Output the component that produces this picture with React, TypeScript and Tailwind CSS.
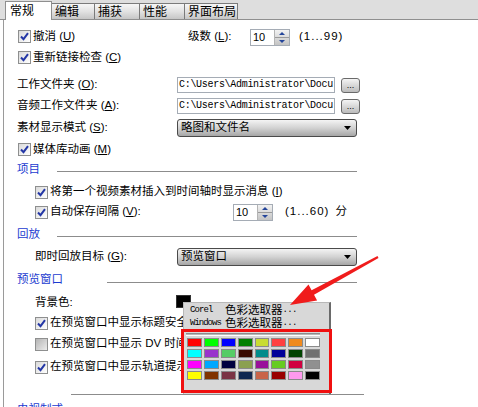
import React from "react";

const Check = ({ checked = true, disabled = false }: { checked?: boolean; disabled?: boolean }) => (
  <span
    className={
      disabled
        ? "inline-flex h-[13px] w-[13px] shrink-0 items-center justify-center border border-[#8e8f8f] bg-linear-to-br from-[#b4b4b4] to-[#ececec]"
        : "inline-flex h-[13px] w-[13px] shrink-0 items-center justify-center border border-[#8e8f8f] bg-linear-to-br from-[#dadada] to-white"
    }
  >
    {checked && (
      <svg width="9" height="9" viewBox="0 0 9 9">
        <path d="M1 4.5 L3.5 7.2 L8 1.2" fill="none" stroke="#2437a6" strokeWidth="2" />
      </svg>
    )}
  </span>
);

const Spin = ({ value }: { value: string }) => (
  <div className="flex h-[17px] w-[40px] shrink-0 border border-[#a5acb5] bg-white">
    <span className="flex-1 pl-[2px] text-[11px] leading-[15px]">{value}</span>
    <span className="flex w-[15px] flex-col border-l border-[#b4b4b4] bg-linear-to-b from-[#f2f2f2] to-[#c4c4c4]">
      <span className="flex flex-1 items-center justify-center border-b border-[#9a9a9a]">
        <svg width="6" height="3" viewBox="0 0 6 3">
          <path d="M0 3 L3 0 L6 3 Z" fill="#24459a" />
        </svg>
      </span>
      <span className="flex flex-1 items-center justify-center">
        <svg width="6" height="3" viewBox="0 0 6 3">
          <path d="M0 0 L6 0 L3 3 Z" fill="#24459a" />
        </svg>
      </span>
    </span>
  </div>
);

const Drop = ({ text }: { text: string }) => (
  <div className="flex h-[18px] w-[180px] shrink-0 items-center justify-between rounded-[3px] border border-[#4a4a4a] bg-linear-to-b from-[#f4f4f4] via-[#d2d2d2] to-[#a6a6a6] pl-[3px] pr-[5px] text-[11.5px]">
    <span>{text}</span>
    <svg width="7" height="4" viewBox="0 0 7 4">
      <path d="M0 0 H7 L3.5 4 Z" fill="#000" />
    </svg>
  </div>
);

const PathInput = () => (
  <div className="flex h-[16px] w-[158px] shrink-0 items-center overflow-hidden whitespace-nowrap border border-[#a5acb5] bg-white pl-[1px] [font-family:'Liberation_Mono',monospace] text-[10px] tracking-[-0.3px]">
    {"C:\\Users\\Administrator\\Docu"}
  </div>
);

const DotBtn = () => (
  <div className="ml-[6px] flex h-[15px] w-[19px] shrink-0 items-end justify-center rounded-[3px] border border-[#6a6a6a] bg-linear-to-b from-[#f4f4f4] to-[#bcbcbc] pb-[2px] text-[9px] leading-none">
    ...
  </div>
);

const Section = ({ label, gap, lineMt }: { label: string; gap: string; lineMt: string }) => (
  <div className="flex h-[20px] w-[340px] shrink-0 items-center">
    <span className="text-[#1b3bd0]">{label}</span>
    <span className={`${gap} ${lineMt} h-px flex-1 bg-[#8c8c8c]`} />
  </div>
);

const palette = [
  ["#ff0000", "#00ff00", "#0000ff", "#008000", "#c8dc32", "#ff4040", "#f08a1e", "#ffffff"],
  ["#00ffff", "#9933cc", "#55cc66", "#3a0a00", "#008b8b", "#000099", "#004400", "#707070"],
  ["#ff00ff", "#00a8ff", "#000040", "#8ba050", "#99109a", "#66cc22", "#d00040", "#909090"],
  ["#ffff00", "#803300", "#7a3344", "#102850", "#c86448", "#990000", "#ff99ee", "#000000"],
];

const Tab = ({ label, w }: { label: string; w: string }) => (
  <div
    className={`${w} flex h-[16px] items-center border-r border-t border-[#7a7a7a] bg-linear-to-b from-[#f6f6f6] via-[#e2e2e2] to-[#c6c6c6] pl-[3px] text-[12px]`}
  >
    {label}
  </div>
);

const Row = ({ mt, pl, children }: { mt: string; pl: string; children: React.ReactNode }) => (
  <div className={`${mt} ${pl} flex h-[20px] shrink-0 items-center whitespace-nowrap`}>{children}</div>
);

export default function App() {
  return (
    <div className="relative h-[407px] w-[478px] overflow-hidden bg-white text-[11.5px] leading-none text-black [font-family:'Liberation_Sans','Noto_Sans_CJK_SC',sans-serif]">
      {/* tab bar */}
      <div className="flex h-[20px] items-end border-b border-[#8f8f8f] bg-[#dedede] pl-[5px]">
        <div className="relative z-10 -mb-px flex h-[19px] w-[47px] items-center border-x border-t border-[#8f8f8f] bg-white pl-[4px] text-[12px]">
          常规
        </div>
        <Tab label="编辑" w="w-[43px]" />
        <Tab label="捕获" w="w-[45px]" />
        <Tab label="性能" w="w-[45px]" />
        <Tab label="界面布局" w="w-[53px]" />
      </div>

      {/* body */}
      <div className="ml-[3px] flex flex-col border-l border-[#9a9a9a] pl-[13px]">
        <Row mt="mt-[7px]" pl="pl-0">
          <div className="flex w-[171px] items-center">
            <span className="ml-[1px]">
              <Check />
            </span>
            <span className="ml-[2px]">
              撤消 (<u>U</u>)
            </span>
          </div>
          <span className="w-[62px]">
            级数 (<u>L</u>):
          </span>
          <Spin value="10" />
          <span className="ml-[9px] tracking-[1px]">(1...99)</span>
        </Row>

        <Row mt="mt-[1px]" pl="pl-0">
          <span className="ml-[1px]">
            <Check />
          </span>
          <span className="ml-[2px]">
            重新链接检查 (<u>C</u>)
          </span>
        </Row>

        <Row mt="mt-[7px]" pl="pl-0">
          <span className="w-[160px]">
            工作文件夹 (<u>O</u>):
          </span>
          <PathInput />
          <DotBtn />
        </Row>

        <Row mt="mt-[1px]" pl="pl-0">
          <span className="w-[160px]">
            音频工作文件夹 (<u>A</u>):
          </span>
          <PathInput />
          <DotBtn />
        </Row>

        <Row mt="mt-[2px]" pl="pl-0">
          <span className="w-[160px]">
            素材显示模式 (<u>S</u>):
          </span>
          <Drop text="略图和文件名" />
        </Row>

        <Row mt="mt-[2px]" pl="pl-0">
          <span className="ml-[1px]">
            <Check />
          </span>
          <span className="ml-[2px]">
            媒体库动画 (<u>M</u>)
          </span>
        </Row>

        <Section label="项目" gap="ml-[17px]" lineMt="mt-[2px]" />

        <Row mt="mt-[2px]" pl="pl-[18px]">
          <Check />
          <span className="ml-[2px]">
            将第一个视频素材插入到时间轴时显示消息 (<u>I</u>)
          </span>
        </Row>

        <Row mt="mt-0" pl="pl-[18px]">
          <div className="flex w-[198px] items-center">
            <Check />
            <span className="ml-[2px]">
              自动保存间隔 (<u>V</u>):
            </span>
          </div>
          <Spin value="10" />
          <span className="ml-[12px] tracking-[1px]">(1...60)</span>
          <span className="ml-[6px]">分</span>
        </Row>

        <div className="mt-[3px] shrink-0">
          <Section label="回放" gap="ml-[17px]" lineMt="mt-[2px]" />
        </div>

        <Row mt="mt-[2px]" pl="pl-[18px]">
          <span className="w-[142px]">
            即时回放目标 (<u>G</u>):
          </span>
          <Drop text="预览窗口" />
        </Row>

        <div className="mt-[3px] shrink-0">
          <Section label="预览窗口" gap="ml-[44px]" lineMt="mt-[4px]" />
        </div>

        <Row mt="mt-[3px]" pl="pl-[18px]">
          <span className="w-[141px]">背景色:</span>
          <span className="-mt-[3px] h-[13px] w-[15px] border border-[#333] bg-black" />
        </Row>

        <Row mt="mt-0" pl="pl-[18px]">
          <Check />
          <span className="ml-[2px]">
            在预览窗口中显示标题安全区域 (<u>A</u>)
          </span>
        </Row>

        <Row mt="mt-[1px]" pl="pl-[18px]">
          <Check checked={false} disabled />
          <span className="ml-[2px]">
            在预览窗口中显示 DV 时间码 (<u>D</u>)
          </span>
        </Row>

        <Row mt="mt-[3px]" pl="pl-[18px]">
          <Check />
          <span className="ml-[2px]">
            在预览窗口中显示轨道提示 (<u>R</u>)
          </span>
        </Row>

        <div className="ml-[54px] mt-[17px] h-px w-[293px] shrink-0 bg-[#8c8c8c]" />

        <Row mt="mt-[5px]" pl="pl-0">
          <span className="text-[#1b3bd0]">电视制式</span>
        </Row>
      </div>

      {/* popup menu */}
      <div className="absolute left-[183px] top-[302px] h-[92px] w-[148px] border-l border-t border-[#b8b8b8] border-r-2 border-r-[#6a6a6a] bg-[#d8d8d8]">
        <div className="mt-[1px] flex h-[13px] items-center whitespace-nowrap pl-[6px]">
          <span className="inline-block w-[35px] [font-family:'Liberation_Mono',monospace] text-[9px] tracking-[-0.9px]">
            Corel
          </span>
          <span className="text-[11.5px]">色彩选取器</span>
          <span className="[font-family:'Liberation_Mono',monospace] text-[9px] tracking-[-0.6px]">...</span>
        </div>
        <div className="flex h-[13px] items-center whitespace-nowrap pl-[6px]">
          <span className="inline-block w-[35px] [font-family:'Liberation_Mono',monospace] text-[9px] tracking-[-1px]">
            Windows
          </span>
          <span className="text-[11.5px]">色彩选取器</span>
          <span className="[font-family:'Liberation_Mono',monospace] text-[9px] tracking-[-0.6px]">...</span>
        </div>
      </div>

      {/* red highlight box with palette */}
      <div className="absolute left-[181px] top-[329px] h-[64px] w-[151px] border-[3px] border-[#f01010] bg-[#d8d8d8]">
        <div className="ml-[2px] mt-[1px] h-[3px] w-[134px] border-b border-t border-b-white border-t-[#8c8c8c] bg-[#b8b8b8]" />
        <div className="ml-[3px] mt-[2px] grid h-[42px] w-[133px] grid-cols-8 grid-rows-4 gap-x-[2px] gap-y-[2px]">
          {palette.flat().map((c, i) => (
            <span key={i} className="border border-[#8a8a8a]" style={{ backgroundColor: c }} />
          ))}
        </div>
      </div>

      {/* red arrow */}
      <svg className="pointer-events-none absolute left-0 top-0" width="478" height="407" viewBox="0 0 478 407">
        <polygon
          points="377.5,256.1 311.6,290.3 308.5,284.6 290,305 317.1,300.4 314,294.7 378.5,257.9"
          fill="#f01c1c"
        />
      </svg>
    </div>
  );
}
